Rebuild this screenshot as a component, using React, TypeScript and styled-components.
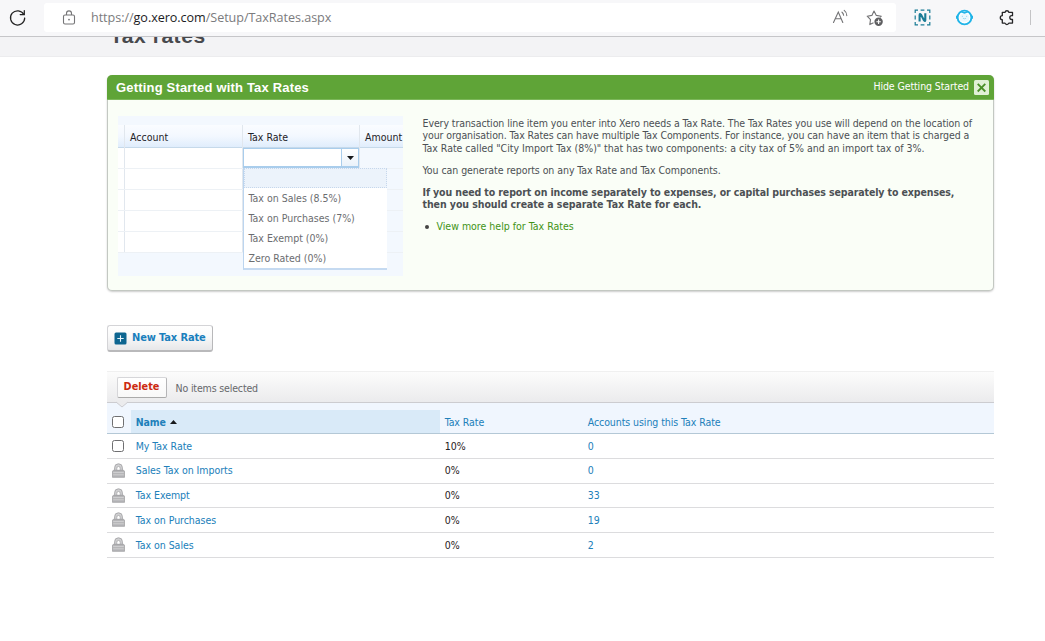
import React from "react";
import styled, { createGlobalStyle } from "styled-components";

const GlobalStyle = createGlobalStyle`
  * { box-sizing: border-box; }
  html, body { margin: 0; padding: 0; background: #fff; overflow: hidden; }
  body { font-family: "DejaVu Sans Condensed", "DejaVu Sans", sans-serif; font-stretch: condensed; font-size: 10px; color: #4c5054; }
`;

const Page = styled.div`
  width: 1045px;
  height: 641px;
  overflow: hidden;
  background: #fff;
`;

/* Browser chrome */
const BrowserBar = styled.div`
  display: flex;
  align-items: flex-start;
  height: 37px;
  padding-top: 3px;
  background: #f7f7f9;
  border-bottom: 1px solid #c6c6c9;
`;
const ReloadSlot = styled.div`
  width: 44px;
  padding: 6px 0 0 9px;
  height: 29px;
`;
const Address = styled.div`
  display: flex;
  align-items: center;
  width: 852px;
  height: 29px;
  padding: 0 12px 0 18px;
  background: #fff;
  border-radius: 3px;
`;
const Url = styled.div`
  flex: 1;
  margin-left: 15px;
  padding-top: 1px;
  font: 12.6px/20px "Open Sans", sans-serif;
  letter-spacing: -0.05px;
  color: #7b7b7d;
  white-space: nowrap;
  b { font-weight: 400; color: #1c1c1e; }
`;
const AddressIcons = styled.div`
  display: flex;
  gap: 17px;
`;
const Extensions = styled.div`
  display: flex;
  align-items: center;
  height: 29px;
  padding-left: 18px;
  gap: 25px;
`;
const BarDivider = styled.i`
  width: 1px;
  height: 15px;
  margin-left: -10px;
  background: #c4c4c6;
`;

/* Page heading */
const TitleStrip = styled.header`
  height: 20px;
  padding-left: 110px;
  background: #f3f3f5;
  border-bottom: 1px solid #ececee;
  overflow: hidden;
`;
const Title = styled.h1`
  margin: -14px 0 0;
  font: bold 21px/26px "Liberation Sans", sans-serif;
  letter-spacing: 0.55px;
  color: #48494d;
`;
const Content = styled.main`
  width: 887px;
  margin: 18px 0 0 107px;
`;

/* Getting started panel */
const Panel = styled.section`
  height: 216px;
  background: #fafef7;
  border: 1px solid #c3c8c2;
  border-top: 0;
  border-radius: 5px;
  box-shadow: 0 1px 2px #ccc;
`;
const PanelHeader = styled.div`
  display: flex;
  justify-content: space-between;
  align-items: center;
  height: 25px;
  margin: 0 -1px;
  padding: 0 5px 0 9px;
  background: #5fa437;
  border-bottom: 1px solid #7cb75a;
  border-radius: 5px 5px 0 0;
  color: #fff;
`;
const PanelTitle = styled.h2`
  margin: 1px 0 0;
  font: bold 13px/20px "Liberation Sans", sans-serif;
  letter-spacing: 0.18px;
`;
const HideLink = styled.div`
  display: flex;
  align-items: center;
  gap: 5px;
  font-size: 10.5px;
  letter-spacing: -0.1px;
  span { padding-bottom: 2px; }
`;
const PanelBody = styled.div`
  display: flex;
  padding: 16px 0 0 10px;
`;
const Copy = styled.div`
  margin: 1px 0 0 19.5px;
  line-height: 12.4px;
  white-space: nowrap;
`;
const Para = styled.p<{ $bold?: boolean }>`
  margin: 0 0 9.5px;
  font-weight: ${(p) => (p.$bold ? 700 : 400)};
`;
const Line = styled.span<{ $ls?: number }>`
  display: block;
  font-size: 10.5px;
  letter-spacing: ${(p) => p.$ls ?? 0}px;
`;
const HelpItem = styled.div`
  display: flex;
  align-items: center;
  color: #3f9316;
  font-size: 10.5px;
  &::before {
    content: "";
    width: 4px;
    height: 4px;
    margin: 1px 8px 0 2px;
    border-radius: 50%;
    background: #444;
  }
`;

/* Invoice grid illustration */
const Demo = styled.div`
  position: relative;
  width: 285px;
  height: 160px;
  padding-top: 9px;
  background: #f3f8fe;
`;
const DemoRow = styled.div<{ $head?: boolean }>`
  display: grid;
  grid-template-columns: 7px 118px 117px 43px;
  height: ${(p) => (p.$head ? 23 : 21)}px;
  border-bottom: 1px solid ${(p) => (p.$head ? "#c6d9ea" : "#edf1f5")};
  background: ${(p) => (p.$head ? "linear-gradient(#fafcff, #f3f8ff 50%, #e0edfc)" : "transparent")};
`;
const DemoCell = styled.div<{ $white?: boolean }>`
  padding-left: 5px;
  border-right: 1px solid #e1e7ee;
  background: ${(p) => (p.$white ? "#fff" : "transparent")};
  font-size: 10.5px;
  line-height: 24px;
  color: #1e2227;
  white-space: nowrap;
  &:last-child { border-right: 0; }
`;
const Select = styled.div`
  position: absolute;
  left: 125px;
  top: 32px;
  display: flex;
  width: 116px;
  height: 20px;
  background: #fff;
  border: 1px solid #a9cdec;
  border-bottom-width: 2px;
`;
const SelectArrow = styled.div`
  display: flex;
  align-items: center;
  justify-content: center;
  width: 17px;
  margin-left: auto;
  border-left: 1px solid #a9cdec;
  background: linear-gradient(#fff, #eaf2fa);
`;
const Menu = styled.div`
  position: absolute;
  left: 125px;
  top: 52px;
  width: 144px;
  height: 102px;
  background: #fff;
  border-left: 1px solid #bcd5ef;
  border-bottom: 2px solid #c5daf1;
`;
const MenuBlank = styled.div`
  height: 20px;
  border: 1px dotted #c6d7ec;
  background: #ecf3fb;
`;
const MenuItem = styled.div`
  height: 20px;
  padding-left: 4.5px;
  font-size: 10.5px;
  line-height: 21px;
  color: #6b6d70;
  white-space: nowrap;
`;

/* Actions */
const NewButton = styled.button`
  display: flex;
  align-items: center;
  gap: 5px;
  width: 106px;
  height: 27px;
  margin-top: 34px;
  padding: 0 0 0 6px;
  border: 1px solid #d4d4d7;
  border-right-color: #b8b8ba;
  border-bottom: 2px solid #b9b9bb;
  border-radius: 3px;
  background: linear-gradient(#fff, #fafafa 40%, #e7e7e9);
  font: bold 11px/20px "DejaVu Sans Condensed", "DejaVu Sans", sans-serif;
  font-stretch: condensed;
  letter-spacing: -0.12px;
  color: #1a7fbd;
  white-space: nowrap;
`;
const Toolbar = styled.div`
  position: relative;
  display: flex;
  align-items: center;
  gap: 9px;
  height: 32px;
  margin-top: 19px;
  padding-left: 9.5px;
  background: linear-gradient(#fcfcfc, #ebebed);
  border-top: 1px solid #f0f0f0;
  border-bottom: 1px solid #ccccd0;
  font-size: 10.5px;
  letter-spacing: -0.15px;
  color: #66686b;
  > span { padding-top: 2px; }
`;
const DeleteButton = styled.button`
  width: 50px;
  height: 21px;
  padding: 0;
  border: 1px solid #d6d6d9;
  border-bottom-color: #aaa;
  border-right-color: #b5b5b7;
  border-radius: 2px;
  background: linear-gradient(#fff, #f8f8f8);
  font: bold 10.8px/18px "DejaVu Sans Condensed", "DejaVu Sans", sans-serif;
  font-stretch: condensed;
  color: #cc2a10;
`;
const Notch = styled.svg`
  position: absolute;
  left: 8px;
  bottom: -6px;
`;

/* Table */
const columns = "24px 309px 143px 1fr";
const HeadRow = styled.div`
  display: grid;
  grid-template-columns: ${columns};
  height: 31px;
  padding-top: 7px;
  background: #f0f6fe;
  border-bottom: 1px solid #b4c8d6;
`;
const Row = styled.div`
  display: grid;
  grid-template-columns: ${columns};
  height: 24.75px;
  border-bottom: 1px solid #dcdcde;
`;
const Cell = styled.div<{ $link?: boolean; $sorted?: boolean; $head?: boolean }>`
  display: flex;
  align-items: center;
  gap: 4px;
  padding: ${(p) => (p.$head ? "1px 0 0 4.7px" : "0 0 0.5px 4.7px")};
  font-size: 10.5px;
  letter-spacing: ${(p) => (p.$head ? -0.07 : -0.03)}px;
  font-weight: ${(p) => (p.$sorted ? 700 : 400)};
  color: ${(p) => (p.$link ? "#2180ba" : "#1f2022")};
  background: ${(p) => (p.$sorted ? "#d9eaf8" : "transparent")};
  white-space: nowrap;
`;
const Checkbox = styled.i`
  width: 12px;
  height: 12px;
  border: 1px solid #6f6f71;
  border-radius: 2.5px;
  background: #fff;
`;

const ReloadIcon = () => (
  <svg width="18" height="18" viewBox="0 0 18 18" fill="none" stroke="#222" strokeWidth="1.25" strokeLinecap="round">
    <path d="M14.8 5.4A7.1 7.1 0 1 0 15.7 9" />
    <path d="M15.3 1.6V5.6H11.2" />
  </svg>
);
const SiteLockIcon = () => (
  <svg width="14" height="16" viewBox="0 0 14 16" fill="none" stroke="#757577" strokeWidth="1.1">
    <rect x="1.5" y="5" width="11" height="9" rx="1.5" />
    <path d="M4.5 5V3.4a2.5 2.5 0 0 1 5 0V5" />
    <circle cx="7" cy="9.6" r=".9" fill="#757577" stroke="none" />
  </svg>
);
const ReadAloudIcon = () => (
  <svg width="17" height="16" viewBox="0 0 17 16" fill="none" stroke="#737375" strokeWidth="1.1" strokeLinecap="round">
    <path d="M1.5 13.5 6.3 3l4.5 10.5M3.2 9.8h6.1M10 3.2c1 .8 1.5 1.8 1.6 3M12.2 1.4c1.8 1.3 2.6 3 2.6 5.2" />
  </svg>
);
const StarIcon = () => (
  <svg width="18" height="18" viewBox="0 0 18 18" fill="none" stroke="#737375" strokeWidth="1.1" strokeLinejoin="round">
    <path d="M7.5 13.8 3.8 15.6l.7-4.9L1.2 7.2l4.7-.8L8 2l2.3 4.4 5 .8-1.3 1.2" />
    <circle cx="12.6" cy="12.7" r="4.2" fill="#5f5f61" stroke="none" />
    <path d="M12.6 10.5v4.4M10.4 12.7h4.4" stroke="#fff" />
  </svg>
);
const NIcon = () => (
  <svg width="17" height="17" viewBox="0 0 17 17" fill="none" stroke="#1b7c96">
    <path
      d="M1.2 4V1.2H4M6.6 1.2H10.4M13 1.2H15.8V4M15.8 6.6V10.4M15.8 13V15.8H13M10.4 15.8H6.6M4 15.8H1.2V13M1.2 10.4V6.6"
      strokeWidth="1.2"
    />
    <path d="M5.6 12.6V6q.2-1.7 1.3-.4l3.2 5.8q1 1.2 1.2-.4V4.2" strokeWidth="2.1" strokeLinejoin="round" />
  </svg>
);
const FaceIcon = () => (
  <svg width="17" height="17" viewBox="0 0 18 18">
    <circle cx="9" cy="9" r="7.3" fill="#fff" stroke="#20b4e8" strokeWidth="2" />
    <path d="M4.6 3.2h8.8L9 5.2z" fill="#20b4e8" />
    <path d="M1 7.2v3.2M17 7.2v3.2" stroke="#20b4e8" strokeWidth="2" />
    <rect x="3.8" y="5" width="10.4" height="8.6" rx="4" fill="#e9f8fe" />
    <path d="M6.2 7.8h1.2M10.6 7.8h1.2M7.3 9.8q1.7 1.2 3.4 0" fill="none" stroke="#8fd6f0" strokeWidth=".9" />
  </svg>
);
const PuzzleIcon = () => (
  <svg width="17" height="17" viewBox="0 0 17 17" fill="none" stroke="#252527" strokeWidth="1.3" strokeLinejoin="round">
    <path d="M4.3 3.3H7a2 2 0 0 1 3.9 0h3.6v3.4h-.8a1.9 1.9 0 0 0 0 3.8h.8v3.6h-3.7a2 2 0 0 1-3.8 0H4.3v-3.4a2 2 0 0 1 0-4z" />
  </svg>
);
const CloseIcon = () => (
  <svg width="15" height="15" viewBox="0 0 15 15">
    <rect width="15" height="15" rx="1.5" fill="#e1f0d6" />
    <path d="m3.7 3.9 7.6 7.6m0-7.6-7.6 7.6" stroke="#4a8f27" strokeWidth="1.8" />
  </svg>
);
const PlusIcon = () => (
  <svg width="13" height="13" viewBox="0 0 13 13">
    <rect x=".5" y=".5" width="12" height="12" rx="1.5" fill="#0d6590" />
    <path d="M6.5 3.3v6.4M3.3 6.5h6.4" stroke="#e8f4fa" strokeWidth="1.1" />
  </svg>
);
const RowLock = () => (
  <svg width="13" height="15" viewBox="0 0 13 15">
    <path d="M2.6 8V4.7a3.9 3.9 0 0 1 7.8 0V8z" fill="#cfcfd1" stroke="#a6a6a8" strokeWidth=".9" />
    <path d="M4.8 7.6V5.2a1.7 1.7 0 0 1 3.4 0v2.4z" fill="#fff" stroke="#a9a9ab" strokeWidth=".8" />
    <path d="M1.3 7.3h10.4l.9 1v6H.4v-6z" fill="#b6b6b8" stroke="#a0a0a2" strokeWidth=".8" />
    <path d="M1.2 9.5h10.6M1.2 11.8h10.6" stroke="#d4d4d6" strokeWidth=".8" />
  </svg>
);
const Triangle = ({ up = false }: { up?: boolean }) => (
  <svg width="7" height="4" viewBox="0 0 8 4" preserveAspectRatio="none">
    <path d={up ? "M0 4 4 0l4 4z" : "M0 0h8L4 4z"} fill="#17191b" />
  </svg>
);

const rates = [
  { name: "My Tax Rate", rate: "10%", accounts: 0, locked: false },
  { name: "Sales Tax on Imports", rate: "0%", accounts: 0, locked: true },
  { name: "Tax Exempt", rate: "0%", accounts: 33, locked: true },
  { name: "Tax on Purchases", rate: "0%", accounts: 19, locked: true },
  { name: "Tax on Sales", rate: "0%", accounts: 2, locked: true },
];
const menuItems = ["Tax on Sales (8.5%)", "Tax on Purchases (7%)", "Tax Exempt (0%)", "Zero Rated (0%)"];

export default function App() {
  return (
    <Page>
      <GlobalStyle />
      <BrowserBar>
        <ReloadSlot><ReloadIcon /></ReloadSlot>
        <Address>
          <SiteLockIcon />
          <Url>https://<b>go.xero.com</b>/Setup/TaxRates.aspx</Url>
          <AddressIcons><ReadAloudIcon /><StarIcon /></AddressIcons>
        </Address>
        <Extensions>
          <NIcon /><FaceIcon /><PuzzleIcon /><BarDivider />
        </Extensions>
      </BrowserBar>
      <TitleStrip><Title>Tax rates</Title></TitleStrip>
      <Content>
        <Panel>
          <PanelHeader>
            <PanelTitle>Getting Started with Tax Rates</PanelTitle>
            <HideLink><span>Hide Getting Started</span><CloseIcon /></HideLink>
          </PanelHeader>
          <PanelBody>
            <Demo>
              <DemoRow $head>
                <DemoCell /><DemoCell>Account</DemoCell><DemoCell>Tax Rate</DemoCell><DemoCell>Amount</DemoCell>
              </DemoRow>
              {[0, 1, 2, 3, 4].map((n) => (
                <DemoRow key={n}>
                  <DemoCell $white /><DemoCell $white /><DemoCell /><DemoCell />
                </DemoRow>
              ))}
              <Select><SelectArrow><Triangle /></SelectArrow></Select>
              <Menu>
                <MenuBlank />
                {menuItems.map((m) => <MenuItem key={m}>{m}</MenuItem>)}
              </Menu>
            </Demo>
            <Copy>
              <Para>
                <Line $ls={-0.085}>Every transaction line item you enter into Xero needs a Tax Rate. The Tax Rates you use will depend on the location of</Line>
                <Line $ls={-0.1}>your organisation. Tax Rates can have multiple Tax Components. For instance, you can have an item that is charged a</Line>
                <Line $ls={-0.02}>Tax Rate called "City Import Tax (8%)" that has two components: a city tax of 5% and an import tax of 3%.</Line>
              </Para>
              <Para><Line $ls={-0.06}>You can generate reports on any Tax Rate and Tax Components.</Line></Para>
              <Para $bold>
                <Line $ls={-0.11}>If you need to report on income separately to expenses, or capital purchases separately to expenses,</Line>
                <Line $ls={-0.07}>then you should create a separate Tax Rate for each.</Line>
              </Para>
              <HelpItem>View more help for Tax Rates</HelpItem>
            </Copy>
          </PanelBody>
        </Panel>
        <NewButton><PlusIcon />New Tax Rate</NewButton>
        <Toolbar>
          <DeleteButton>Delete</DeleteButton>
          <span>No items selected</span>
          <Notch width="14" height="7" viewBox="0 0 14 7">
            <path d="M0 0h14L7 6z" fill="#ebebed" />
            <path d="M1 1l6 5 6-5" fill="none" stroke="#ccccd0" />
          </Notch>
        </Toolbar>
        <HeadRow>
          <Cell $head><Checkbox /></Cell>
          <Cell $head $link $sorted>Name <Triangle up /></Cell>
          <Cell $head $link>Tax Rate</Cell>
          <Cell $head $link>Accounts using this Tax Rate</Cell>
        </HeadRow>
        {rates.map((r) => (
          <Row key={r.name}>
            <Cell>{r.locked ? <RowLock /> : <Checkbox />}</Cell>
            <Cell $link>{r.name}</Cell>
            <Cell>{r.rate}</Cell>
            <Cell $link>{r.accounts}</Cell>
          </Row>
        ))}
      </Content>
    </Page>
  );
}
